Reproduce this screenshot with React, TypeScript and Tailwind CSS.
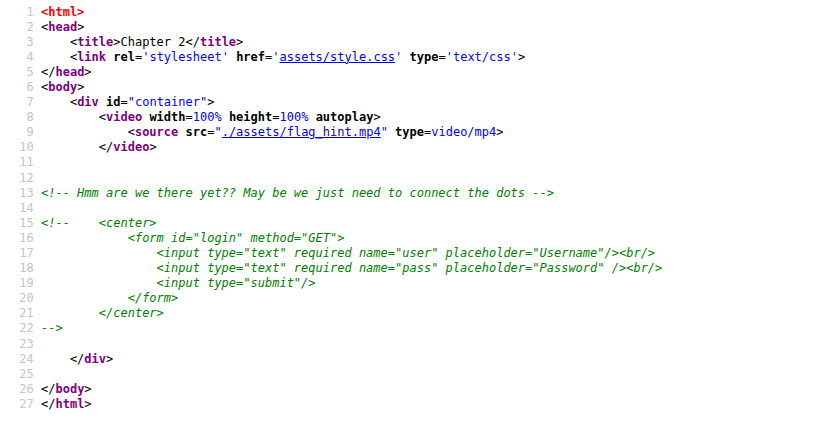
import React from "react";

type Tok = [string, string];

const T = (s: string): Tok => ["t", s];
const TAG = (s: string): Tok => ["tag", s];
const AN = (s: string): Tok => ["an", s];
const AV = (s: string): Tok => ["av", s];
const LNK = (s: string): Tok => ["lnk", s];
const CM = (s: string): Tok => ["cm", s];
const ERR = (s: string): Tok => ["err", s];

const lines: Tok[][] = [
  [ERR("<html>")],
  [T("<"), TAG("head"), T(">")],
  [T("    <"), TAG("title"), T(">Chapter 2</"), TAG("title"), T(">")],
  [
    T("    <"), TAG("link"), T(" "), AN("rel"), T("="), AV("'stylesheet'"), T(" "), AN("href"), T("="),
    AV("'"), LNK("assets/style.css"), AV("'"), T(" "), AN("type"), T("="), AV("'text/css'"), T(">"),
  ],
  [T("</"), TAG("head"), T(">")],
  [T("<"), TAG("body"), T(">")],
  [T("    <"), TAG("div"), T(" "), AN("id"), T("="), AV('"container"'), T(">")],
  [
    T("        <"), TAG("video"), T(" "), AN("width"), T("="), AV("100%"), T(" "), AN("height"), T("="),
    AV("100%"), T(" "), AN("autoplay"), T(">"),
  ],
  [
    T("            <"), TAG("source"), T(" "), AN("src"), T("="), AV('"'), LNK("./assets/flag_hint.mp4"), AV('"'),
    T(" "), AN("type"), T("="), AV("video/mp4"), T(">"),
  ],
  [T("        </"), TAG("video"), T(">")],
  [],
  [],
  [CM("<!-- Hmm are we there yet?? May be we just need to connect the dots -->")],
  [],
  [CM("<!--    <center>")],
  [CM('            <form id="login" method="GET">')],
  [CM('                <input type="text" required name="user" placeholder="Username"/><br/>')],
  [CM('                <input type="text" required name="pass" placeholder="Password" /><br/>')],
  [CM('                <input type="submit"/>')],
  [CM("            </form>")],
  [CM("        </center>")],
  [CM("-->")],
  [],
  [T("    </"), TAG("div"), T(">")],
  [],
  [T("</"), TAG("body"), T(">")],
  [T("</"), TAG("html"), T(">")],
];

function render(tok: Tok, i: number) {
  const [k, s] = tok;
  switch (k) {
    case "tag":
      return <span key={i} className="font-bold text-[#800080]">{s}</span>;
    case "an":
      return <span key={i} className="font-bold text-black">{s}</span>;
    case "av":
      return <span key={i} className="text-[#0000ff]">{s}</span>;
    case "lnk":
      return <span key={i} className="text-[#0000ee] underline">{s}</span>;
    case "cm":
      return <span key={i} className="italic text-[#008000]">{s}</span>;
    case "err":
      return <span key={i} className="font-bold text-[#ff0000]">{s}</span>;
    default:
      return <span key={i}>{s}</span>;
  }
}

export default function App() {
  return (
    <div
      className="w-[817px] h-[435px] bg-white pt-[4.5px] text-black text-[12px] leading-[15.1px] whitespace-pre overflow-hidden"
      style={{ fontFamily: '"DejaVu Sans Mono", monospace' }}
    >
      {lines.map((ln, i) => (
        <div key={i} className="flex h-[15.1px]">
          <span className="w-[41px] shrink-0 text-right pr-[7.2px] text-[#c4c4c4] select-none">{i + 1}</span>
          <span>{ln.map((t, j) => render(t, j))}</span>
        </div>
      ))}
    </div>
  );
}
